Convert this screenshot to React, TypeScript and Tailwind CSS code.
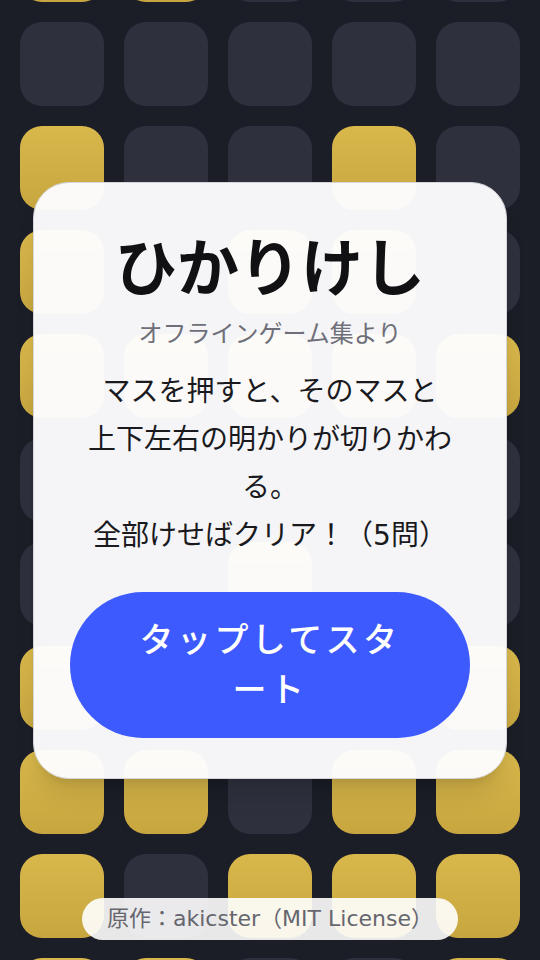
import React from "react"

// 11 rows x 5 cols board behind the start card (1 = lit)
const board: number[][] = [
  [1, 1, 0, 0, 0],
  [0, 0, 0, 0, 0],
  [1, 0, 0, 1, 0],
  [1, 0, 1, 1, 0],
  [1, 1, 1, 1, 1],
  [0, 0, 0, 0, 0],
  [0, 0, 1, 0, 0],
  [1, 0, 0, 0, 1],
  [1, 1, 0, 1, 1],
  [1, 0, 1, 1, 1],
  [1, 1, 0, 0, 1],
]

const font = { fontFamily: '"DejaVu Sans", "Noto Sans CJK JP", sans-serif' }

const Tile = ({ on }: { on: boolean }) => (
  <div
    className={
      on
        ? "h-[84px] w-[84px] rounded-[22px] bg-linear-to-b from-[#d8b84b] to-[#c7a63f]"
        : "h-[84px] w-[84px] rounded-[22px] bg-[#2e303d]"
    }
  />
)

export default function App() {
  return (
    <div className="relative flex h-[960px] w-full items-center justify-center overflow-hidden bg-[#1b1d27]" style={font}>
      <div className="grid w-[500px] shrink-0 grid-cols-5 gap-5">
        {board.flatMap((row, r) => row.map((v, c) => <Tile key={`${r}-${c}`} on={v === 1} />))}
      </div>

      {/* start card */}
      <div className="absolute inset-0 flex items-center justify-center">
        <div className="flex w-[474px] flex-col items-center rounded-[36px] border border-[#d4d5da] bg-[#fdfdff]/[0.965] px-[36px] pt-[48px] pb-[40px] text-center shadow-xl">
          <h1 className="text-[62px] leading-[77px] font-bold text-[#111114]">ひかりけし</h1>
          <p className="mt-2 text-[24px] leading-[36px] text-[#6e6f78]">オフラインゲーム集より</p>
          <p className="mt-4 text-[28px] leading-[48px] text-[#1a1a1e]">
            マスを押すと、そのマスと
            <br />
            上下左右の明かりが切りかわる。
            <br />
            全部けせばクリア！（5問）
          </p>
          <button className="mt-8 h-[146px] w-[400px] rounded-full bg-[#3d5afe] px-[56px] text-[34px] leading-[50px] font-medium tracking-[0.1em] text-white">
            タップしてスタート
          </button>
        </div>
      </div>

      {/* credit */}
      <div className="absolute right-0 bottom-5 left-0 flex justify-center">
        <div className="rounded-full bg-white/90 px-[25px] text-[22px] leading-[42px] text-[#66666e]">
          原作：akicster（MIT License）
        </div>
      </div>
    </div>
  )
}
